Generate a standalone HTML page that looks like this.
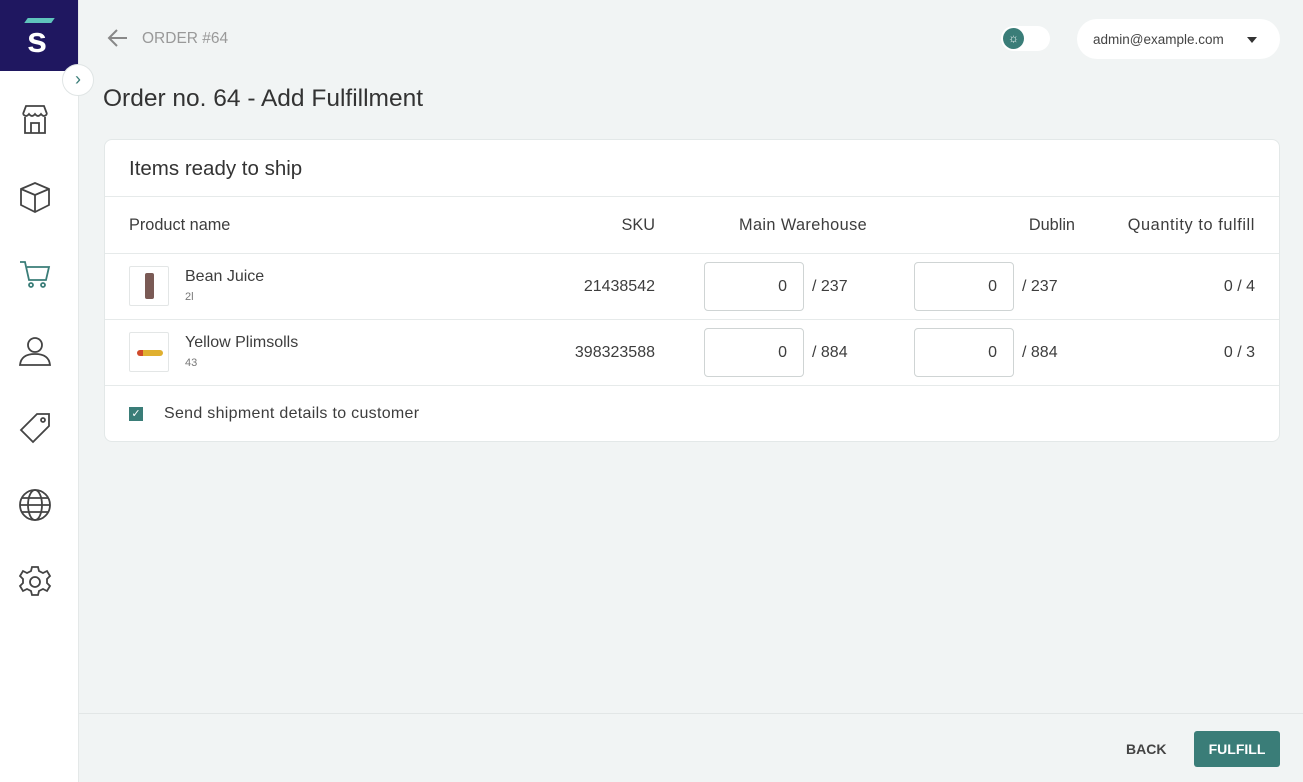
<!DOCTYPE html>
<html><head><style>
*{box-sizing:border-box;margin:0;padding:0}
body{width:1303px;height:782px;background:#f1f4f4;font-family:"Liberation Sans",sans-serif;color:#3d3d3d;position:relative;overflow:hidden}
.side{position:absolute;left:0;top:0;width:79px;height:782px;background:#fff;border-right:1px solid #e4e8e8}
.logo{position:absolute;left:0;top:0;width:78px;height:71px;background:#1f1760}
.ic{position:absolute;left:17px;width:36px;height:36px}
.abs{position:absolute}
.card{position:absolute;left:104px;top:139px;width:1176px;height:303px;background:#fff;border:1px solid #e3e8e8;border-radius:8px}
.hr{position:absolute;left:0;width:100%;height:1px;background:#e6eaea}
.t{position:absolute;font-size:16px;white-space:nowrap}
.h{font-size:16.3px}
.inp{position:absolute;width:100px;height:49px;border:1px solid #cfd4d4;border-radius:4px;font-size:16px;text-align:right;padding:15px 16px 0 0}
.thumb{position:absolute;left:24px;width:40px;height:40px;border:1px solid #e3e6e6;border-radius:2px}
</style></head><body>
<div class="side">
<div class="logo">
<div class="abs" style="left:26px;top:18px;width:27px;height:5px;background:#5fc4bc;transform:skewX(-35deg)"></div>
<div class="abs" style="left:27px;top:20px;font-size:36px;font-weight:bold;color:#fff;line-height:40px">s</div>
</div>
<div class="abs" style="left:62px;top:64px;width:32px;height:32px;border-radius:50%;background:#fff;border:1px solid #e0e5e5;text-align:center;line-height:28px;color:#3a7d78;font-size:18px">›</div>
<svg class="ic" style="top:102px" viewBox="0 0 36 36" fill="none" stroke="#444" stroke-width="1.8"><path d="M6 12l3-8h18l3 8M6 12q3 4 6 0q3 4 6 0q3 4 6 0q3 4 6 0M8 15v16h20V15M14 31V21h8v10"/></svg>
<svg class="ic" style="top:179px" viewBox="0 0 36 36" fill="none" stroke="#444" stroke-width="1.8"><path d="M4 10l14-6 14 6v16l-14 7-14-7zM4 10l14 6 14-6M18 16v17"/></svg>
<svg class="ic" style="top:256px" viewBox="0 0 36 36" fill="none" stroke="#3a7d78" stroke-width="1.8"><path d="M3 6h5l4 18h17l3-13H10"/><circle cx="14" cy="29" r="2"/><circle cx="26" cy="29" r="2"/></svg>
<svg class="ic" style="top:333px" viewBox="0 0 36 36" fill="none" stroke="#444" stroke-width="1.8"><circle cx="18" cy="12" r="7"/><path d="M3 32q1-11 15-11t15 11z"/></svg>
<svg class="ic" style="top:410px" viewBox="0 0 36 36" fill="none" stroke="#444" stroke-width="1.8"><path d="M20 4h12v12L16 32 4 20z"/><circle cx="26" cy="10" r="2"/></svg>
<svg class="ic" style="top:487px" viewBox="0 0 36 36" fill="none" stroke="#444" stroke-width="1.8"><circle cx="18" cy="18" r="15"/><ellipse cx="18" cy="18" rx="7" ry="15"/><path d="M3 18h30M5 11h26M5 25h26"/></svg>
<svg class="ic" style="top:564px" viewBox="0 0 36 36" fill="none" stroke="#444" stroke-width="1.8"><circle cx="18" cy="18" r="5"/><path d="M15 3h6l1 4 4 2 4-2 3 5-3 3v4l3 3-3 5-4-2-4 2-1 4h-6l-1-4-4-2-4 2-3-5 3-3v-4l-3-3 3-5 4 2 4-2z"/></svg>
</div>
<svg class="abs" style="left:107px;top:28px" width="22" height="20" viewBox="0 0 22 20" fill="none" stroke="#888" stroke-width="2"><path d="M20 10H3M10 2l-8 8 8 8"/></svg>
<div class="t" style="left:142px;top:30px;font-size:15.5px;color:#999">ORDER #64</div>
<div class="t" style="left:103px;top:85px;font-size:24.5px;color:#333">Order no. 64 - Add Fulfillment</div>
<div class="abs" style="left:1001px;top:26px;width:49px;height:25px;border-radius:13px;background:#fff"></div>
<div class="abs" style="left:1003px;top:28px;width:21px;height:21px;border-radius:50%;background:#3a7d78;color:#fff;font-size:12px;text-align:center;line-height:21px">☼</div>
<div class="abs" style="left:1077px;top:19px;width:203px;height:40px;border-radius:20px;background:#fff"></div>
<div class="t" style="left:1093px;top:32px;font-size:13.5px;color:#444">admin@example.com</div>
<div class="abs" style="left:1247px;top:37px;border-left:5px solid transparent;border-right:5px solid transparent;border-top:6px solid #333"></div>
<div class="card">
<div class="t" style="left:24px;top:17px;font-size:20.5px;color:#333">Items ready to ship</div>
<div class="hr" style="top:56px"></div>
<div class="t h" style="left:24px;top:76px">Product name</div>
<div class="t h" style="right:624px;top:76px">SKU</div>
<div class="t h" style="left:634px;top:76px;letter-spacing:0.4px">Main Warehouse</div>
<div class="t h" style="right:204px;top:76px">Dublin</div>
<div class="t h" style="right:24px;top:76px;letter-spacing:0.6px">Quantity to fulfill</div>
<div class="hr" style="top:113px"></div>
<div class="thumb" style="top:126px"><div class="abs" style="left:15px;top:6px;width:9px;height:26px;background:#7a5a55;border-radius:2px"></div></div>
<div class="t" style="left:80px;top:128px">Bean Juice</div>
<div class="t" style="left:80px;top:151px;font-size:11px;color:#777">2l</div>
<div class="t" style="right:624px;top:138px">21438542</div>
<div class="inp" style="left:599px;top:122px">0</div><div class="t" style="left:707px;top:138px">/ 237</div>
<div class="inp" style="left:809px;top:122px">0</div><div class="t" style="left:917px;top:138px">/ 237</div>
<div class="t" style="right:24px;top:138px">0 / 4</div>
<div class="hr" style="top:179px"></div>
<div class="thumb" style="top:192px"><div class="abs" style="left:7px;top:17px;width:26px;height:6px;background:#e0b030;border-radius:3px;border-left:6px solid #d04a2a"></div></div>
<div class="t" style="left:80px;top:194px">Yellow Plimsolls</div>
<div class="t" style="left:80px;top:217px;font-size:11px;color:#777">43</div>
<div class="t" style="right:624px;top:204px">398323588</div>
<div class="inp" style="left:599px;top:188px">0</div><div class="t" style="left:707px;top:204px">/ 884</div>
<div class="inp" style="left:809px;top:188px">0</div><div class="t" style="left:917px;top:204px">/ 884</div>
<div class="t" style="right:24px;top:204px">0 / 3</div>
<div class="hr" style="top:245px"></div>
<div class="abs" style="left:24px;top:267px;width:14px;height:14px;background:#3a7d78;color:#fff;font-size:11px;text-align:center;line-height:14px">✓</div>
<div class="t" style="left:59px;top:265px;letter-spacing:0.3px">Send shipment details to customer</div>
</div>
<div class="abs" style="left:79px;top:713px;width:1224px;height:1px;background:#e2e6e6"></div>
<div class="t" style="left:1126px;top:741px;font-size:14px;font-weight:bold;color:#444">BACK</div>
<div class="abs" style="left:1194px;top:731px;width:86px;height:36px;background:#3a7d78;border-radius:3px;color:#fff;font-size:14px;font-weight:bold;text-align:center;line-height:36px">FULFILL</div>
</body></html>
